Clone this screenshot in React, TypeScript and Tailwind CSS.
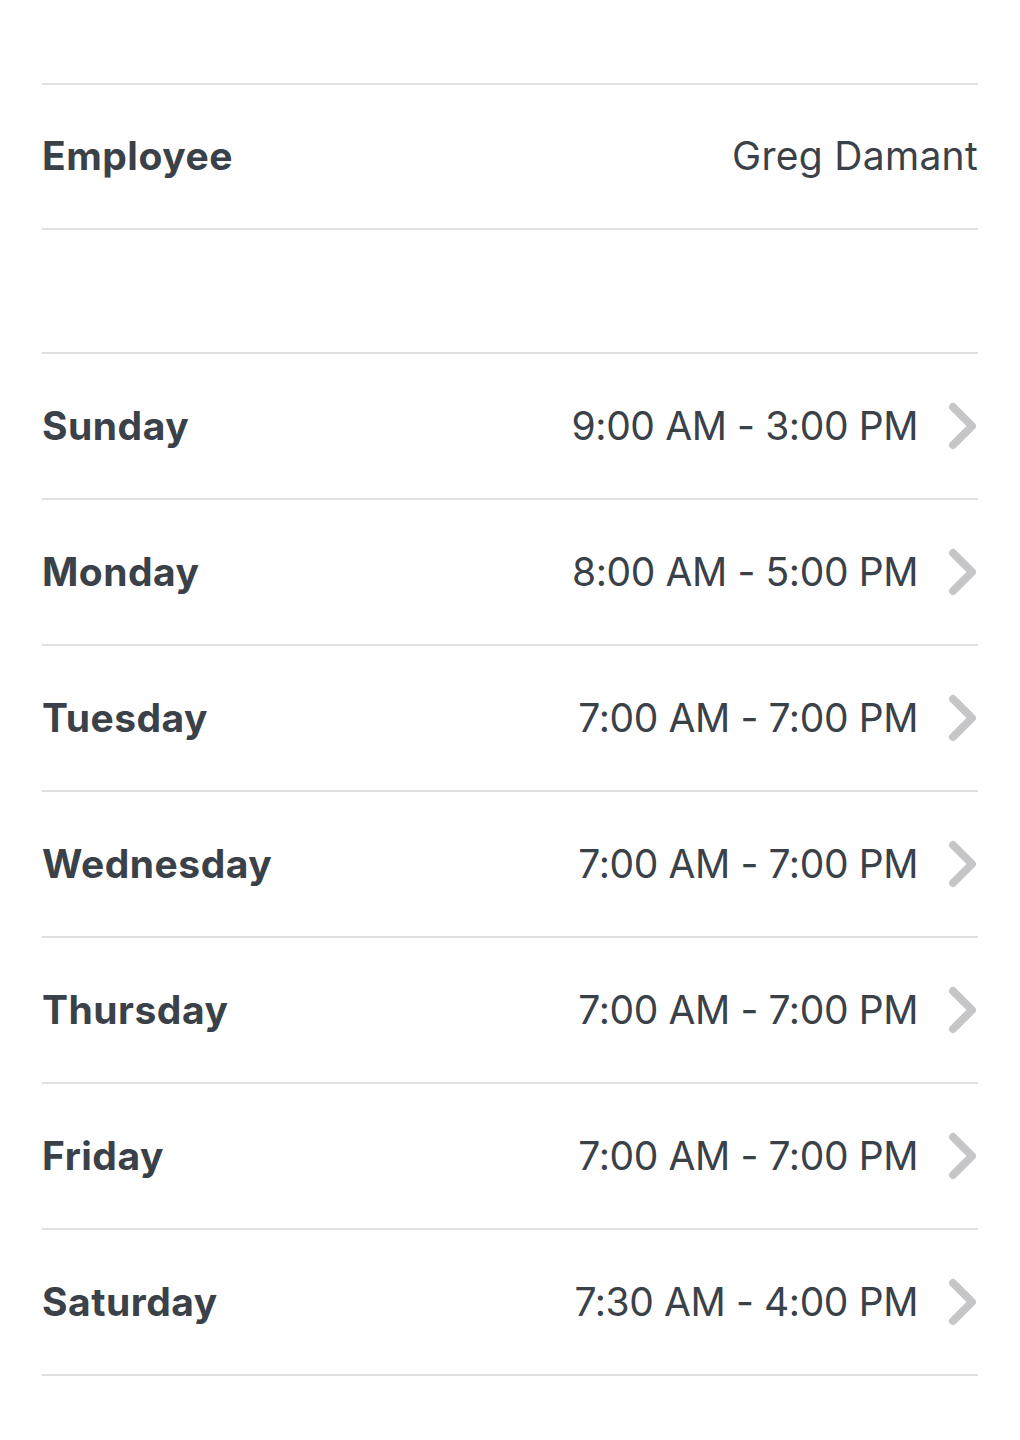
const DAYS: { day: string; hours: string }[] = [
  { day: "Sunday", hours: "9:00 AM - 3:00 PM" },
  { day: "Monday", hours: "8:00 AM - 5:00 PM" },
  { day: "Tuesday", hours: "7:00 AM - 7:00 PM" },
  { day: "Wednesday", hours: "7:00 AM - 7:00 PM" },
  { day: "Thursday", hours: "7:00 AM - 7:00 PM" },
  { day: "Friday", hours: "7:00 AM - 7:00 PM" },
  { day: "Saturday", hours: "7:30 AM - 4:00 PM" },
];

function Chevron() {
  return (
    <svg width="30" height="48" viewBox="0 0 30 48" fill="none" className="shrink-0">
      <path
        d="M5 5 L24 24 L5 43"
        stroke="#c6c6c8"
        strokeWidth="8"
        strokeLinecap="round"
        strokeLinejoin="round"
      />
    </svg>
  );
}

export default function App() {
  return (
    <div
      className="min-h-[1440px] bg-white px-[42px] pt-[83px] text-[#3b4148]"
      style={{ fontFamily: "Inter, 'Noto Sans', sans-serif" }}
    >
      {/* Employee */}
      <div className="border-y-2 border-[#e1e1e3]">
        <div className="flex h-[143px] items-center justify-between">
          <span className="text-[39px] font-bold tracking-[0.5px]">Employee</span>
          <span className="text-[39px] font-normal tracking-[0.3px]">Greg Damant</span>
        </div>
      </div>

      <div className="h-[122px]" />

      {/* Schedule */}
      <div className="border-t-2 border-[#e1e1e3]">
        {DAYS.map((d) => (
          <div
            key={d.day}
            className="flex h-[146px] items-center justify-between border-b-2 border-[#e1e1e3]"
          >
            <span className="text-[39px] font-bold tracking-[0.5px]">{d.day}</span>
            <div className="flex items-center gap-[30px]">
              <span className="text-[39px] font-normal tracking-[-0.4px]">{d.hours}</span>
              <Chevron />
            </div>
          </div>
        ))}
      </div>
    </div>
  );
}
